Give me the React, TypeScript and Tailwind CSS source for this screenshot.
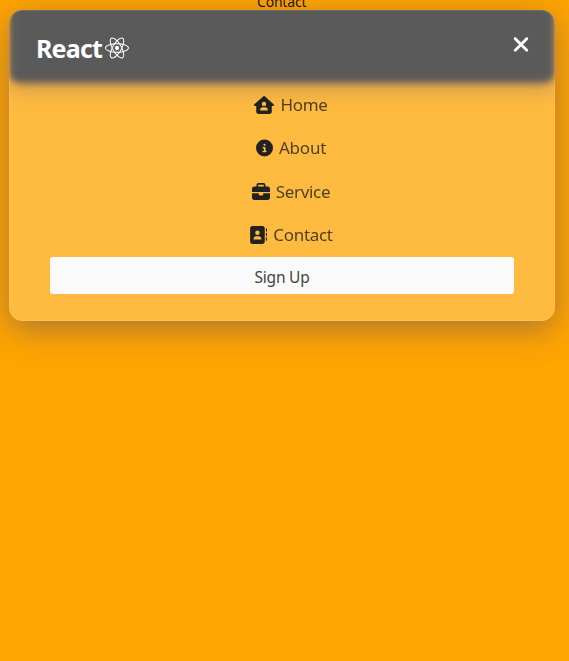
import {
  FaAddressBook,
  FaBriefcase,
  FaCircleInfo,
  FaHouseUser,
  FaReact,
  FaXmark,
} from "react-icons/fa6";

const items = [
  { label: "Home", Icon: FaHouseUser, size: "w-[20px]", text: "tracking-[-0.3px]" },
  { label: "About", Icon: FaCircleInfo, size: "w-[17px]", text: "tracking-[-0.2px]" },
  { label: "Service", Icon: FaBriefcase, size: "w-[18px]", text: "tracking-[-0.35px]" },
  { label: "Contact", Icon: FaAddressBook, size: "w-[18px]", text: "tracking-[-0.3px]" },
];

export default function App() {
  return (
    <div className="relative h-[661px] w-full overflow-hidden bg-[#ffa500] px-[9px] pt-[9.5px] font-['Noto_Sans','Open_Sans',sans-serif]">
      <p className="absolute left-[257px] top-[-8px] text-[14px] leading-[20px] tracking-[-0.2px] text-black/90">
        Contact
      </p>
      <nav className="relative h-[311.5px] w-[546px] rounded-[14px] shadow-[0_8px_32px_0_rgba(31,38,135,0.37)]">
        <div className="relative h-full overflow-hidden rounded-[14px] bg-[#ffbb40]">
          <div className="absolute inset-x-0 top-[-12px] h-[130px] overflow-hidden">
            <div className="mt-[4px] h-[81px] rounded-[10px] bg-[#5a5a5a] shadow-[0_6px_20px_rgba(31,38,135,0.25)] blur-[3.5px]" />
          </div>
          <div className="absolute inset-0 rounded-[14px] border border-white/10" />
          <header className="relative flex h-[74px] items-start justify-between pl-[27px] pr-[25px]">
            <div className="flex items-center pt-[21px] text-white">
              <span className="text-[25px] font-bold leading-[35px] tracking-[-0.8px]">React</span>
              <FaReact className="ml-[3px] h-[24px] w-[24px]" />
            </div>
            <FaXmark className="mt-[23.5px] h-[23px] w-[18px] text-white" />
          </header>
          <ul className="relative flex flex-col">
            {items.map(({ label, Icon, size, text }) => (
              <li key={label} className="flex h-[43.3px] items-center justify-center gap-[6px] pl-[18px] text-[#222]">
                <Icon className={`h-[18px] ${size}`} />
                <span className={`text-[17px] leading-[24px] opacity-80 ${text}`}>{label}</span>
              </li>
            ))}
          </ul>
          <button className="relative mx-[41px] flex h-[37.5px] w-[464px] items-center justify-center rounded-[3px] bg-[#fafafa] pt-[4px] text-[15.5px] tracking-[-0.2px] text-[#444]">
            Sign Up
          </button>
        </div>
      </nav>
    </div>
  );
}
